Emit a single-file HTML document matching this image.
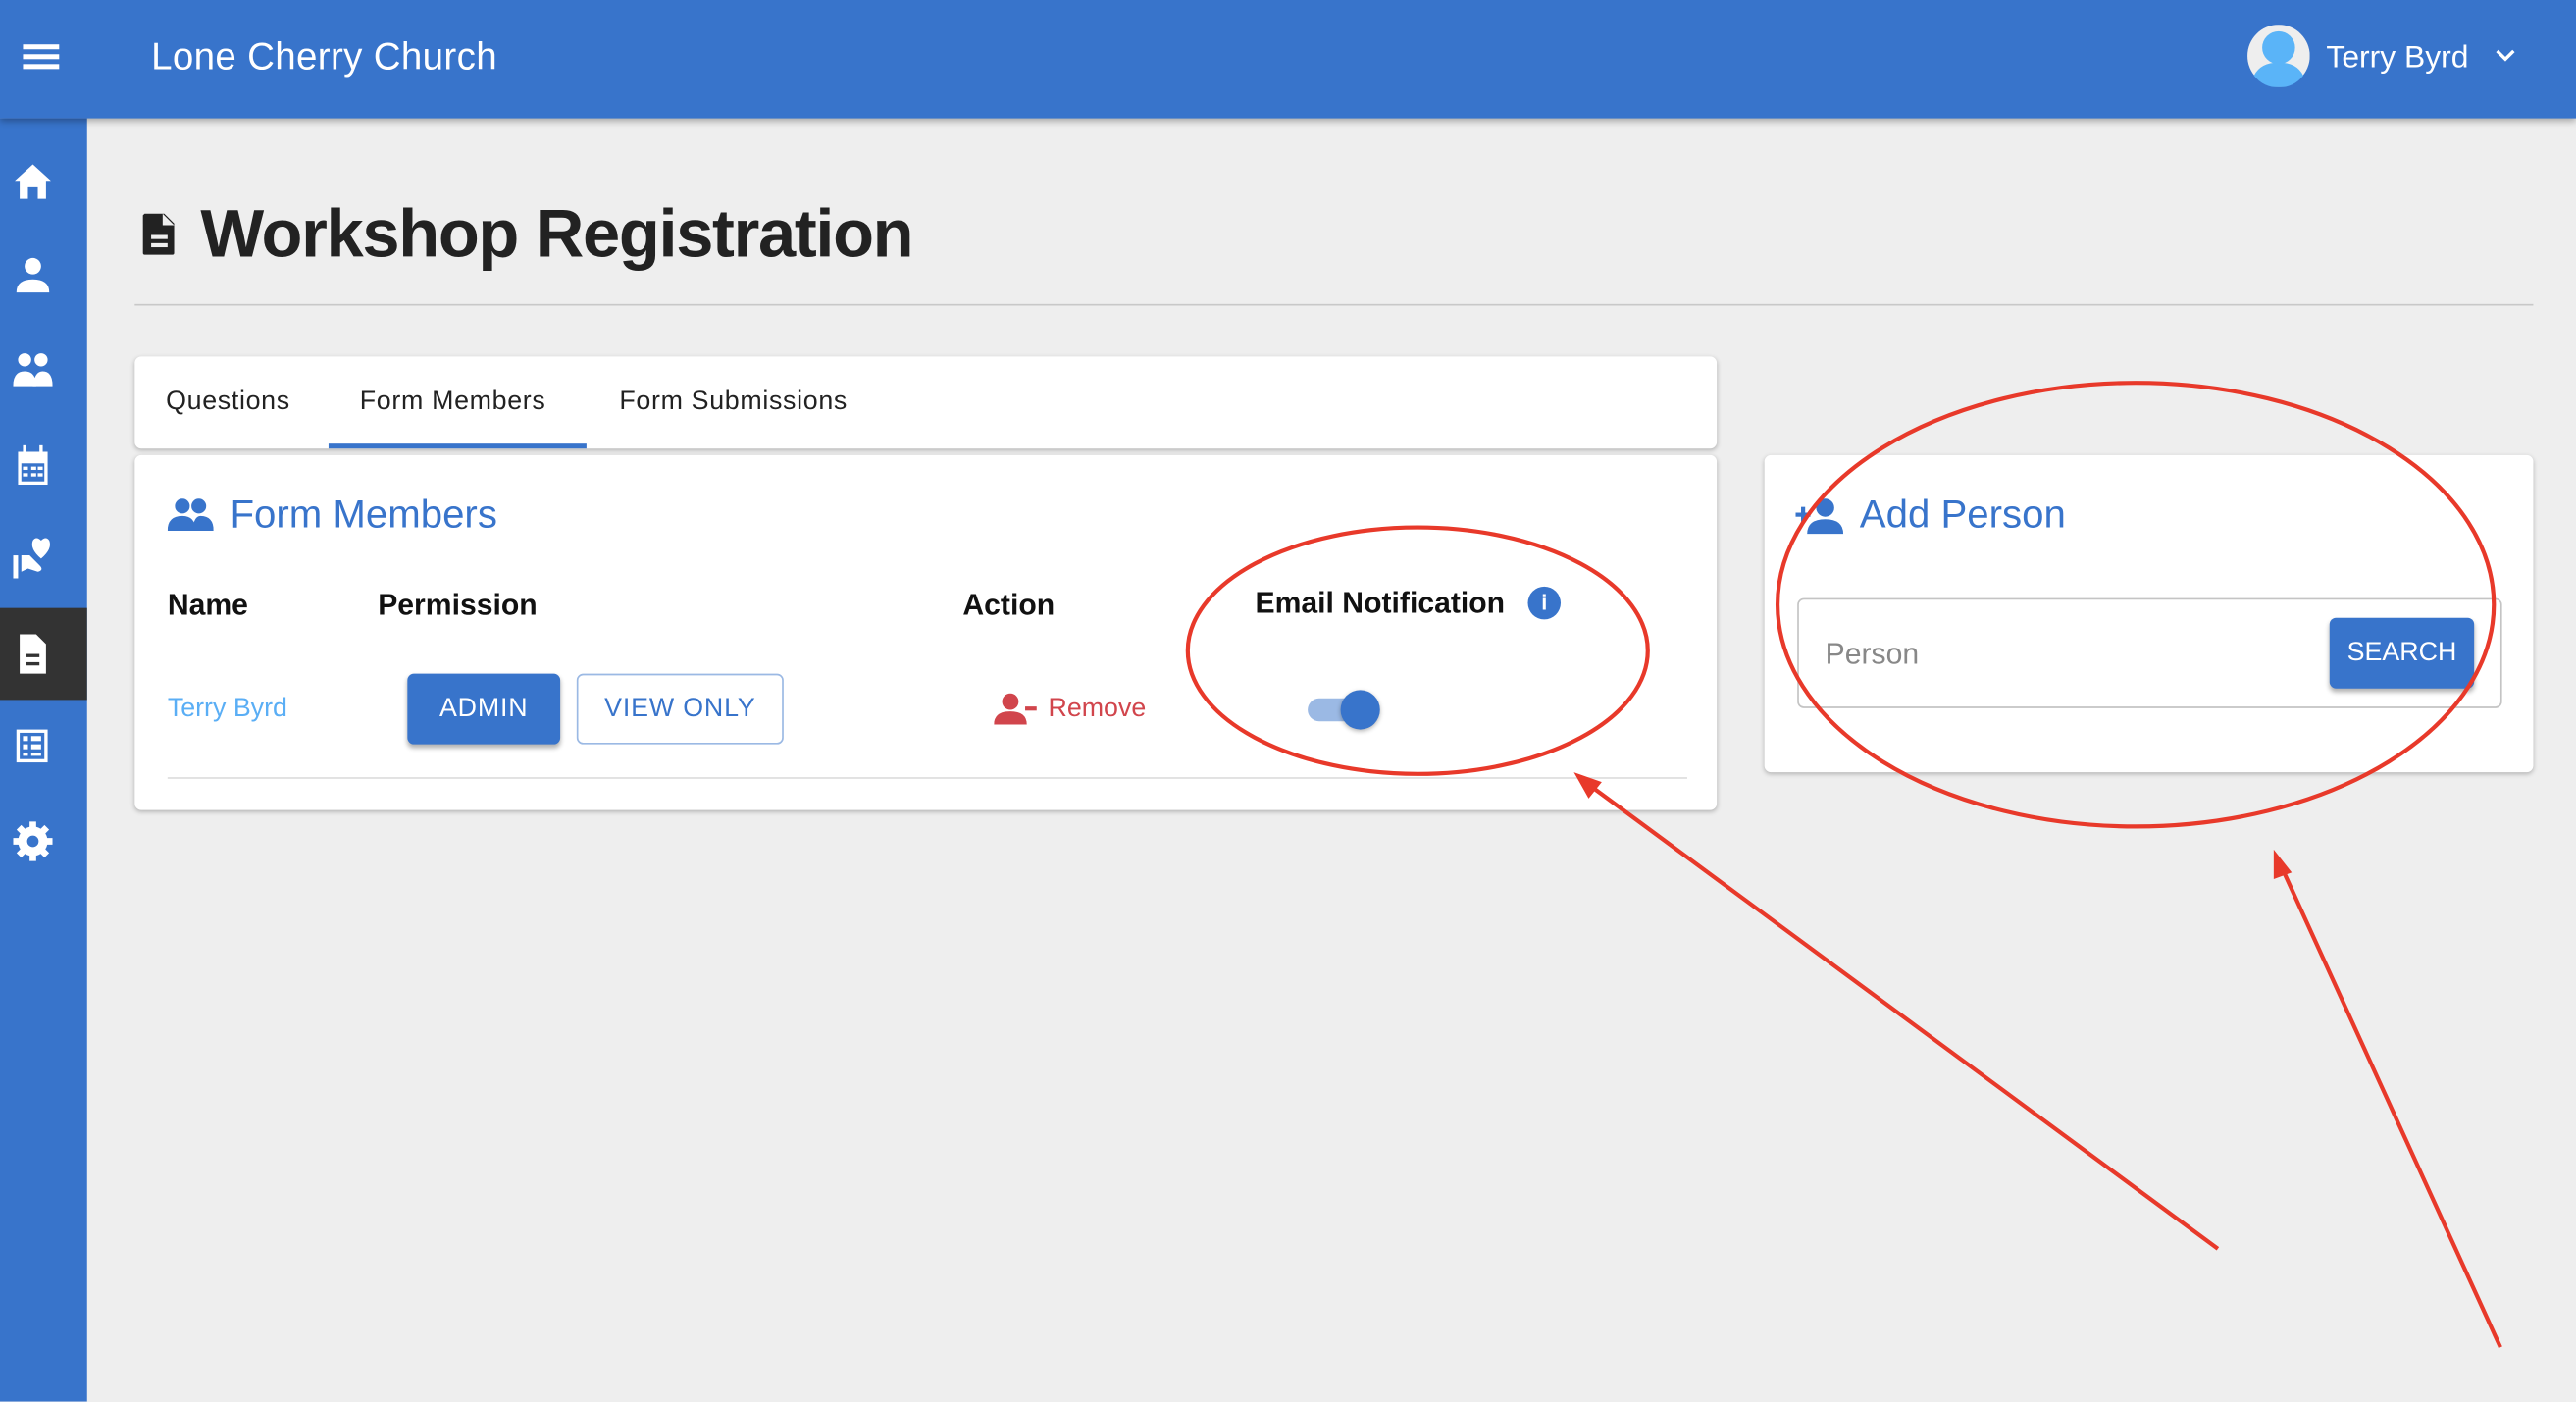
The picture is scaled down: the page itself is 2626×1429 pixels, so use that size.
<!DOCTYPE html>
<html><head><meta charset="utf-8"><style>
html,body{margin:0;padding:0;width:2626px;height:1428px;overflow:hidden;background:#eee;}
#w{position:absolute;left:0;top:0;width:1568px;height:853px;transform:scale(1.67474);transform-origin:0 0;font-family:"Liberation Sans",sans-serif;background:#eeeeee;}
.a{position:absolute;}
.blue{background:#3874cb;}
.t{white-space:nowrap;line-height:1;}
.card{background:#fff;border-radius:4px;box-shadow:0 1px 3px rgba(0,0,0,.25);}
</style></head><body><div id="w">
<div class="a blue" style="left:0;top:0;width:1568px;height:72px;box-shadow:0 2px 4px rgba(0,0,0,.3);z-index:2"></div>
<div class="a" style="left:14px;top:27px;width:22px;height:3px;background:#fff;z-index:3"></div>
<div class="a" style="left:14px;top:33px;width:22px;height:3px;background:#fff;z-index:3"></div>
<div class="a" style="left:14px;top:39px;width:22px;height:3px;background:#fff;z-index:3"></div>
<div class="a t" style="left:92px;top:23px;font-size:23px;color:#fff;z-index:3;letter-spacing:.2px">Lone Cherry Church</div>
<svg class="a" style="left:1368px;top:15px;z-index:3" width="38" height="38" viewBox="0 0 38 38"><circle cx="19" cy="19" r="19" fill="#eee"/><circle cx="19" cy="14" r="10" fill="#5ab4f8"/><path d="M4 31 Q8 23 19 23 Q30 23 34 31 A19 19 0 0 1 4 31Z" fill="#5ab4f8"/></svg>
<div class="a t" style="left:1416px;top:26px;font-size:19px;color:#fff;z-index:3">Terry Byrd</div>
<svg class="a" style="left:1518px;top:28px;z-index:3" width="14" height="12" viewBox="0 0 14 12"><path d="M2 3 L7 8 L12 3" stroke="#fff" stroke-width="2" fill="none"/></svg>
<div class="a blue" style="left:0;top:72px;width:53px;height:781px"></div>
<div class="a" style="left:0;top:370px;width:53px;height:56px;background:#333"></div>
<svg class="a" style="left:8px;top:98px" width="24" height="440" viewBox="0 0 24 440" fill="#fff">
<path d="M12 2 L1 12 H4 V23 H9 V16 H15 V23 H20 V12 H23Z"/>
<circle cx="12" cy="64" r="5"/><path d="M2 80 Q2 72 12 72 Q22 72 22 80Z"/>
<circle cx="7" cy="121" r="4"/><circle cx="17" cy="121" r="4"/><path d="M0 137 Q0 128 7 128 Q14 128 14 137Z"/><path d="M12 137 Q13 128 18 128 Q24 128 24 137Z"/>
<path d="M3 177 H21 V197 H3Z" /><rect x="5" y="184" width="14" height="11" fill="#3874cb"/><rect x="6" y="186" width="3" height="2"/><rect x="11" y="186" width="3" height="2"/><rect x="15" y="186" width="3" height="2"/><rect x="6" y="190" width="3" height="2"/><rect x="11" y="190" width="3" height="2"/><rect x="15" y="190" width="3" height="2"/><rect x="6" y="173" width="2" height="5"/><rect x="16" y="173" width="2" height="5"/>
<rect x="0" y="240" width="3" height="14"/><path d="M5 240 H10 L16 246 Q19 249 15 250 L9 248 L5 250Z"/><path d="M17 242 Q10 236 12 231 Q14 228 17 231 Q20 228 22 231 Q24 236 17 242Z"/>
<path d="M4 288 H14 L20 294 V312 H4Z" /><rect x="8" y="300" width="8" height="2" fill="#333"/><rect x="8" y="305" width="8" height="2" fill="#333"/>
<rect x="2" y="346" width="19" height="20"/><g fill="#3874cb"><rect x="4" y="348" width="15" height="16"/></g><rect x="6" y="350" width="3" height="3"/><rect x="11" y="350" width="6" height="3"/><rect x="6" y="355" width="3" height="3"/><rect x="11" y="355" width="6" height="3"/><rect x="6" y="360" width="3" height="2"/><rect x="11" y="360" width="6" height="2"/>
<circle cx="12" cy="414" r="9"/><g stroke="#fff" stroke-width="4"><line x1="12" y1="402" x2="12" y2="426"/><line x1="0" y1="414" x2="24" y2="414"/><line x1="3.5" y1="405.5" x2="20.5" y2="422.5"/><line x1="20.5" y1="405.5" x2="3.5" y2="422.5"/></g><circle cx="12" cy="414" r="3.5" fill="#3874cb"/>
</svg>
<svg class="a" style="left:86px;top:129px" width="22" height="27" viewBox="0 0 22 27"><path d="M2 1 H14 L20 7 V25 Q20 26 19 26 H2 Q1 26 1 25 V2Z" fill="#222"/><path d="M13 1 V8 H20" fill="#eee"/><rect x="6" y="14" width="10" height="2.5" fill="#eee"/><rect x="6" y="19" width="10" height="2.5" fill="#eee"/></svg>
<div class="a t" style="left:122px;top:122px;font-size:41px;color:#222;font-weight:bold;letter-spacing:-0.8px">Workshop Registration</div>
<div class="a" style="left:82px;top:185px;width:1460px;height:1px;background:#c8c8c8"></div>
<div class="a card" style="left:82px;top:217px;width:963px;height:56px"></div>
<div class="a t" style="left:101px;top:237px;font-size:16px;color:#222;letter-spacing:.4px">Questions</div>
<div class="a t" style="left:219px;top:237px;font-size:16px;color:#222;letter-spacing:.4px">Form Members</div>
<div class="a t" style="left:377px;top:237px;font-size:16px;color:#222;letter-spacing:.4px">Form Submissions</div>
<div class="a" style="left:200px;top:270px;width:157px;height:3px;background:#3874cb"></div>
<div class="a card" style="left:82px;top:277px;width:963px;height:216px"></div>
<svg class="a" style="left:102px;top:303px" width="28" height="20" viewBox="0 0 28 20" fill="#3874cb"><circle cx="9" cy="5" r="4.5"/><circle cx="19" cy="5" r="4.5"/><path d="M0 20 Q0 11 9 11 Q17 11 17 20Z"/><path d="M15 20 Q16 11 20 11 Q28 11 28 20Z"/></svg>
<div class="a t" style="left:140px;top:302px;font-size:24px;color:#3874cb">Form Members</div>
<div class="a t" style="left:102px;top:359px;font-size:18px;color:#111;font-weight:bold">Name</div>
<div class="a t" style="left:230px;top:359px;font-size:18px;color:#111;font-weight:bold">Permission</div>
<div class="a t" style="left:586px;top:359px;font-size:18px;color:#111;font-weight:bold">Action</div>
<div class="a t" style="left:764px;top:358px;font-size:18px;color:#111;font-weight:bold">Email Notification</div>
<div class="a" style="left:930px;top:357px;width:20px;height:20px;border-radius:50%;background:#3874cb;color:#fff;font-size:13px;font-weight:bold;text-align:center;line-height:20px">i</div>
<div class="a t" style="left:102px;top:424px;font-size:16px;color:#5aaef5">Terry Byrd</div>
<div class="a" style="left:248px;top:410px;width:93px;height:43px;background:#3874cb;border-radius:4px;box-shadow:0 2px 3px rgba(0,0,0,.3);color:#fff;font-size:16px;text-align:center;line-height:43px;letter-spacing:.5px">ADMIN</div>
<div class="a" style="left:351px;top:410px;width:124px;height:41px;border:1px solid #9bb9e4;border-radius:4px;color:#3874cb;font-size:16px;text-align:center;line-height:41px;letter-spacing:.5px">VIEW ONLY</div>
<svg class="a" style="left:605px;top:421px" width="28" height="20" viewBox="0 0 28 20" fill="#d1454c"><circle cx="10" cy="6" r="5"/><path d="M0 20 Q0 12 10 12 Q20 12 20 20Z"/><rect x="19" y="9" width="7" height="2.5"/></svg>
<div class="a t" style="left:638px;top:424px;font-size:16px;color:#d1454c">Remove</div>
<div class="a" style="left:796px;top:425px;width:34px;height:14px;border-radius:7px;background:#9bb9e4"></div>
<div class="a" style="left:816px;top:420px;width:24px;height:24px;border-radius:50%;background:#3874cb;box-shadow:0 1px 3px rgba(0,0,0,.3)"></div>
<div class="a" style="left:102px;top:473px;width:925px;height:1px;background:#ddd"></div>
<div class="a card" style="left:1074px;top:277px;width:468px;height:193px"></div>
<svg class="a" style="left:1093px;top:303px" width="30" height="22" viewBox="0 0 30 22" fill="#3874cb"><circle cx="18" cy="6" r="5.5"/><path d="M7 22 Q7 13 18 13 Q29 13 29 22Z"/><rect x="0" y="9" width="9" height="2.5"/><rect x="3.3" y="5.5" width="2.5" height="9"/></svg>
<div class="a t" style="left:1132px;top:302px;font-size:24px;color:#3874cb">Add Person</div>
<div class="a" style="left:1094px;top:364px;width:427px;height:65px;border:1px solid #c4c4c4;border-radius:4px"></div>
<div class="a t" style="left:1111px;top:389px;font-size:18px;color:#888">Person</div>
<div class="a" style="left:1418px;top:376px;width:88px;height:43px;background:#3874cb;border-radius:4px;box-shadow:0 2px 3px rgba(0,0,0,.3);color:#fff;font-size:16px;text-align:center;line-height:43px">SEARCH</div>
<svg class="a" style="left:0;top:0" width="1568" height="853" viewBox="0 0 1568 853">
<g stroke="#e8392a" stroke-width="2.5" fill="none">
<ellipse cx="863" cy="396" rx="140" ry="75"/>
<ellipse cx="1300" cy="368" rx="218" ry="135"/>
<line x1="1350" y1="760" x2="965" y2="476"/>
<line x1="1522" y1="820" x2="1388" y2="526"/>
</g>
<path d="M958 470 L975 476 L967 486Z" fill="#e8392a"/>
<path d="M1384 517 L1395 531 L1384 535Z" fill="#e8392a"/>
</svg>
</div></body></html>
